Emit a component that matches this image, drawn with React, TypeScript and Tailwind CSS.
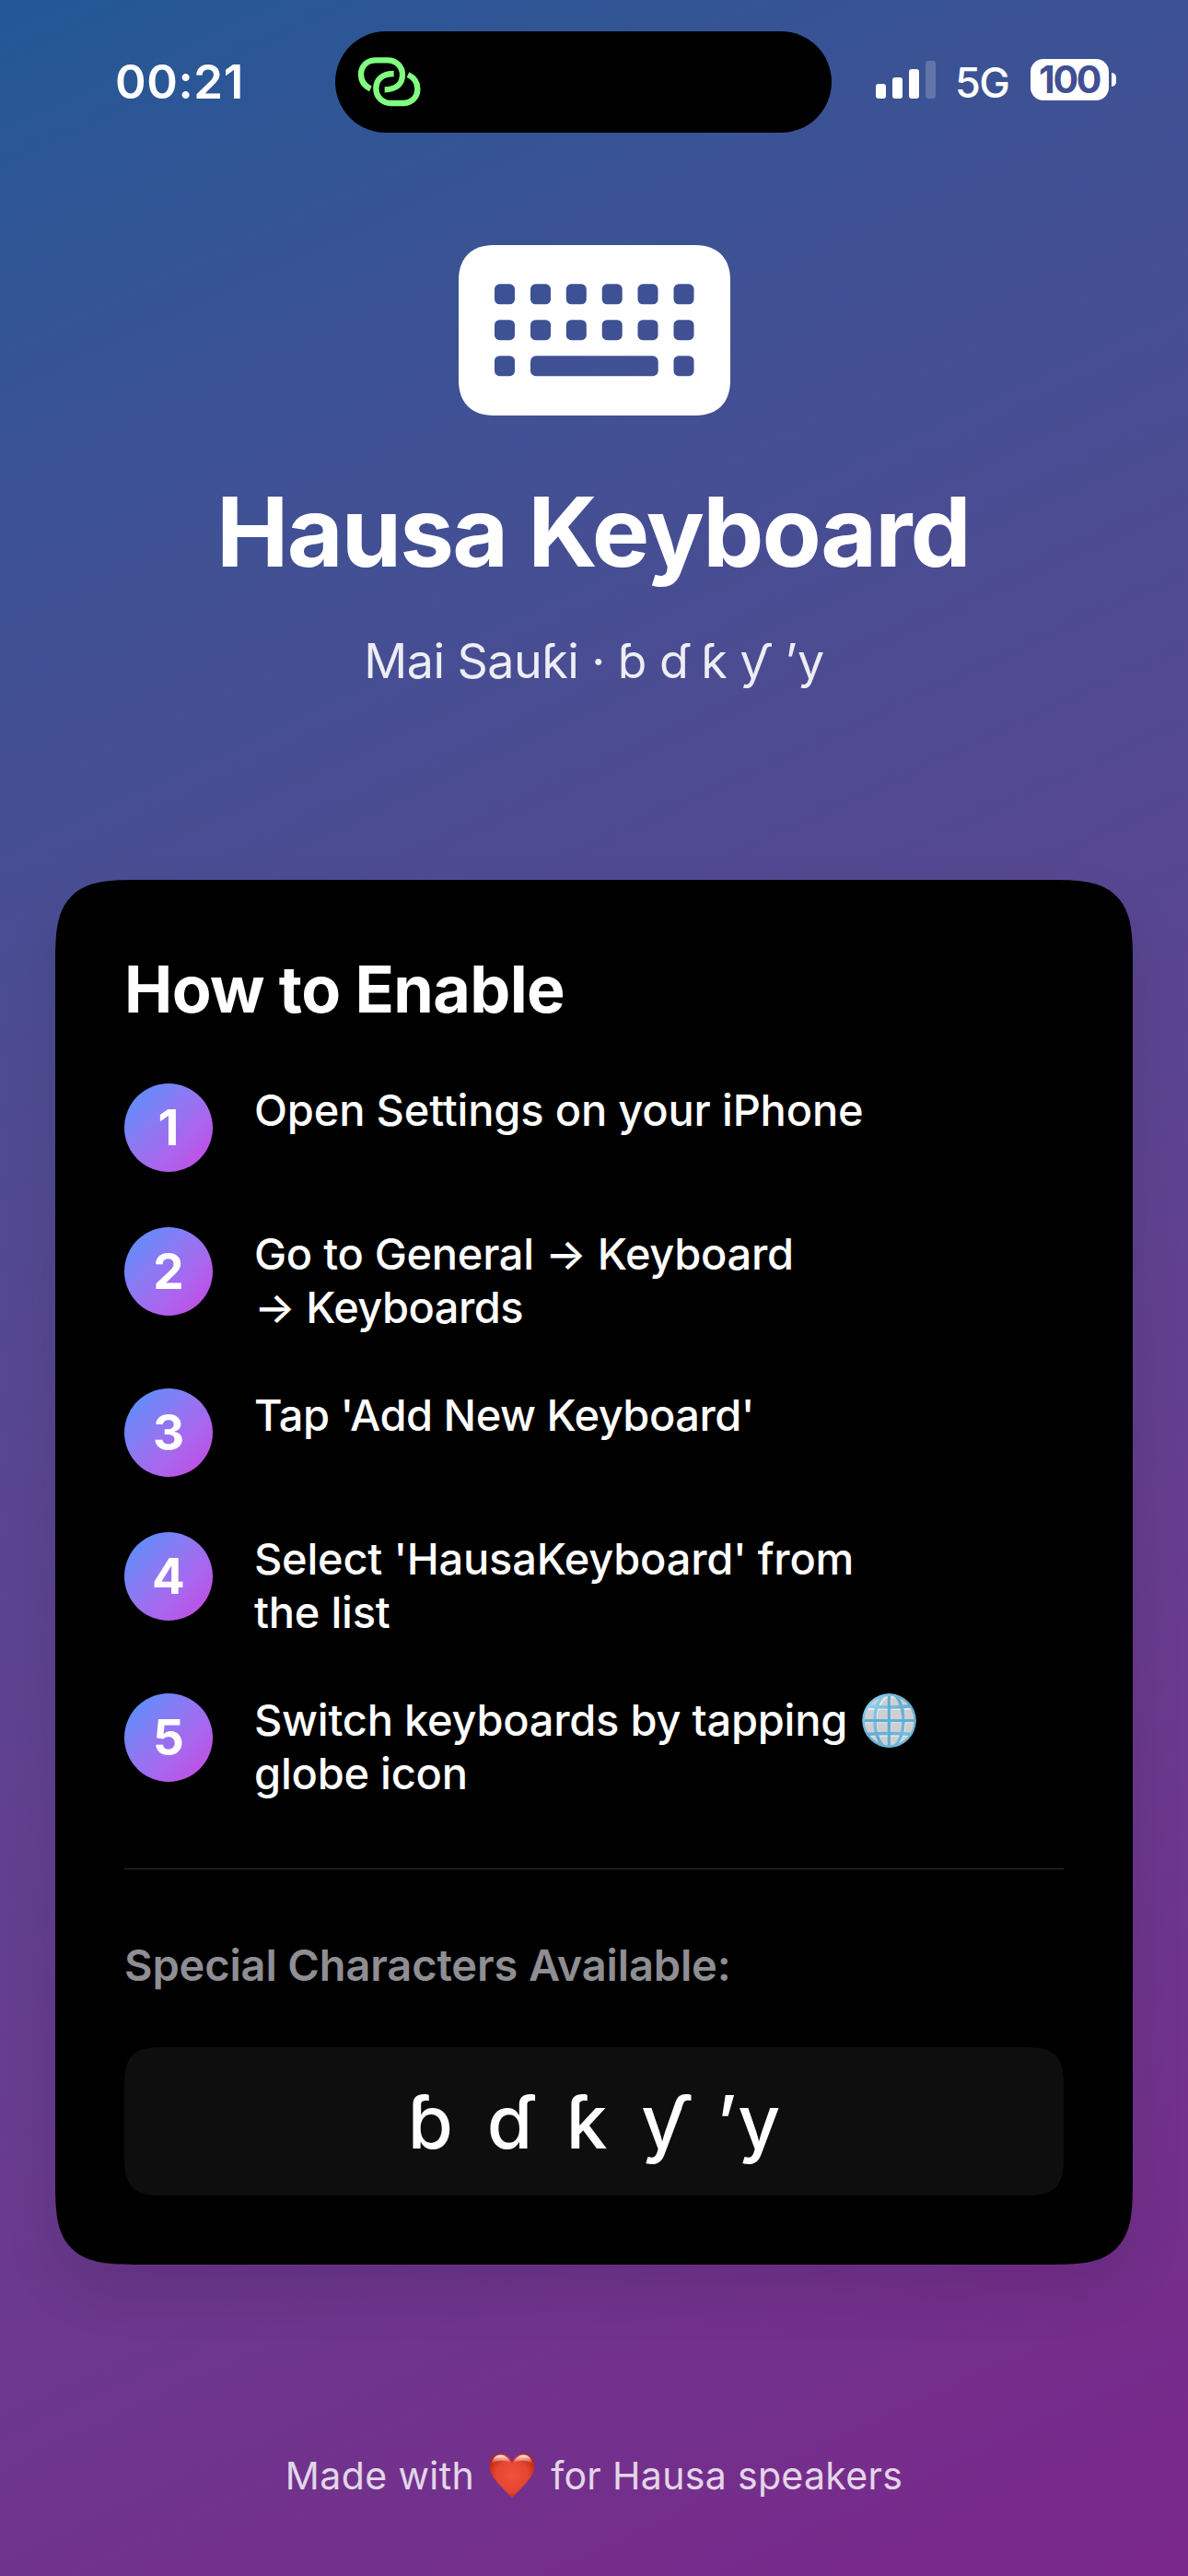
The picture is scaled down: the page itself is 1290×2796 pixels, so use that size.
import type { ReactNode } from "react";

function LinkIcon() {
  const ring =
    "M67 127C46 117 36 101 36 80C36 52 57 34 84 34H122C150 34 171 54 171 82C171 111 151 130 113 130";
  return (
    <svg className="h-[70px] w-[90px]" viewBox="0 0 270 210" fill="none" stroke="#80ff80" strokeWidth="19">
      <path d={ring} />
      <path d={ring} transform="rotate(180 128 104)" />
    </svg>
  );
}

function SignalBars() {
  return (
    <div className="flex h-[41px] items-end gap-[7px]">
      <div className="h-4 w-[11px] rounded-[3px] bg-white" />
      <div className="h-[23px] w-[11px] rounded-[3px] bg-white" />
      <div className="h-8 w-[11px] rounded-[3px] bg-white" />
      <div className="h-[41px] w-[11px] rounded-[3px] bg-white/20" />
    </div>
  );
}

function Battery() {
  return (
    <div className="flex items-center gap-[3px]">
      <div className="flex h-[45px] w-[85px] items-center justify-center rounded-[14px] bg-white pr-px text-[41px] leading-none font-bold tracking-[-2.4px] text-[#414f93]">
        100
      </div>
      <div className="h-[15px] w-[5px] rounded-r-full bg-white" />
    </div>
  );
}

function StatusBar() {
  return (
    <header className="flex h-[110px] items-center pl-[125px] text-white">
      <div className="-mt-0.5 w-[239px] text-[51px] leading-none font-semibold tracking-[0.6px]">00:21</div>
      <div className="flex h-[110px] w-[539px] items-center rounded-full bg-black pl-4">
        <LinkIcon />
      </div>
      <div className="ml-12 flex items-center">
        <div className="-mt-[5px]">
          <SignalBars />
        </div>
        <div className="ml-[21px] w-[82px] text-[45px] leading-none font-medium tracking-[-1.5px]">5G</div>
        <div className="-mt-[5px]">
          <Battery />
        </div>
      </div>
    </header>
  );
}

function KeyboardIcon() {
  const columns = [39, 78, 116.8, 155.7, 194.5, 233.5];
  return (
    <svg className="h-[185px] w-[295px]" viewBox="0 0 295 185">
      <mask id="keys">
        <rect width="295" height="185" fill="#fff" />
        {columns.map((x) => (
          <g key={x}>
            <rect x={x} y="42.3" width="22" height="22" rx="5.5" />
            <rect x={x} y="81.2" width="22" height="22" rx="5.5" />
          </g>
        ))}
        <rect x="39" y="120.2" width="22" height="22" rx="5.5" />
        <rect x="78" y="120.2" width="138.7" height="22" rx="6" />
        <rect x="233.5" y="120.2" width="22" height="22" rx="5.5" />
      </mask>
      <path
        mask="url(#keys)"
        fill="#fff"
        d="M38 0H257C281 0 295 14 295 38V147C295 171 281 185 257 185H38C14 185 0 171 0 147V38C0 14 14 0 38 0Z"
      />
    </svg>
  );
}

function GlobeIcon() {
  return (
    <svg
      role="img"
      aria-label="globe"
      className="relative -top-1 -my-3 ml-1 inline-block h-[59px] w-[59px] align-middle"
      viewBox="0 0 59 59"
      fill="none"
    >
      <defs>
        <linearGradient id="wire" x1="0" y1="0" x2="1" y2="1">
          <stop offset="0" stopColor="#8fd6f5" />
          <stop offset="0.5" stopColor="#62abd0" />
          <stop offset="1" stopColor="#74bde2" />
        </linearGradient>
        <clipPath id="globe-disc">
          <circle cx="29.5" cy="29.5" r="29" />
        </clipPath>
      </defs>
      <circle cx="29.5" cy="29.5" r="28.5" fill="#cfcfd1" />
      <g clipPath="url(#globe-disc)">
        <g stroke="#eaf0f4" strokeWidth="1.5" transform="translate(1.6 2)">
          <ellipse cx="29.5" cy="29.5" rx="15.5" ry="28" />
          <path d="M5 15H54M1 29.5H58M5 44H54M29.5 1V58" />
        </g>
        <g stroke="url(#wire)" strokeWidth="3.4">
          <ellipse cx="29.5" cy="29.5" rx="15.5" ry="30" />
          <path d="M4 13.5Q29.5 16.5 55 13.5M4 44.5Q29.5 42.5 55 44.5" />
        </g>
        <path d="M0 28H59V31.2H0ZM27.8 0H31.2V59H27.8Z" fill="#62aed4" />
      </g>
      <circle cx="29.5" cy="29.5" r="28" stroke="url(#wire)" strokeWidth="2.4" />
    </svg>
  );
}

function HeartIcon() {
  return (
    <svg role="img" aria-label="love" className="h-[50px] w-[50px]" viewBox="0 0 50 50">
      <defs>
        <radialGradient id="heart" cx="0.5" cy="0.5" r="0.6">
          <stop offset="0" stopColor="#f0523c" />
          <stop offset="0.6" stopColor="#e6452f" />
          <stop offset="1" stopColor="#b8200e" />
        </radialGradient>
        <linearGradient id="shine" x1="0" y1="0" x2="0" y2="1">
          <stop offset="0" stopColor="#fff" stopOpacity="0.95" />
          <stop offset="1" stopColor="#fff" stopOpacity="0" />
        </linearGradient>
      </defs>
      <path
        fill="url(#heart)"
        d="M25 11.5C22.5 4.5 18 .7 13 .7C5.5 .7 .7 6 .7 14.5C.7 27 14 37 25 49.3C36 37 49.3 27 49.3 14.5C49.3 6 44.5 .7 37 .7C32 .7 27.5 4.5 25 11.5Z"
      />
      <path fill="url(#shine)" d="M3 12C4 5.5 8 2.6 12.5 2.6C17 2.6 21 5.5 23 11Q13 6 3 12Z" />
      <path fill="url(#shine)" d="M47 12C46 5.5 42 2.6 37.5 2.6C33 2.6 29 5.5 27 11Q37 6 47 12Z" />
    </svg>
  );
}

function Step({ number, children }: { number: number; children: ReactNode }) {
  return (
    <li className="flex items-start gap-[45px]">
      <div className="flex size-24 items-center justify-center rounded-full bg-[linear-gradient(135deg,#4f94ff_0%,#8b7af2_40%,#a966ee_65%,#c944e0_100%)] text-[53px] leading-none font-bold">
        {number}
      </div>
      <p className="text-[47px] leading-[57.5px] font-medium tracking-[-0.24px]">{children}</p>
    </li>
  );
}

export default function App() {
  return (
    <div className="flex h-[2796px] w-[1290px] flex-col overflow-hidden bg-[linear-gradient(155.23deg_in_oklab,#215896,#7a268b)] pt-[34px] font-['Inter','Noto_Sans',sans-serif] text-white">
      <StatusBar />

      <section className="mt-[122px] flex flex-col items-center">
        <KeyboardIcon />
        <h1 className="mt-[66px] mr-0.5 text-[105px] leading-[120px] font-bold tracking-[-1.86px]">Hausa Keyboard</h1>
        <p className="mt-[49px] text-[52px] leading-[64px] tracking-[-0.55px] text-white/90">
          Mai Sauƙi · ɓ ɗ ƙ ƴ ʼy
        </p>
      </section>

      <main className="mx-[60px] mt-[205px] rounded-[92px] bg-black px-[75px] pt-[77px] pb-[75px] shadow-[0_30px_60px_rgba(0,0,0,0.1)] [corner-shape:superellipse(1.7)]">
        <h2 className="text-[70px] leading-[84px] font-bold tracking-[-0.63px]">How to Enable</h2>
        <ol className="mt-[60px] flex flex-col gap-[60px]">
          <Step number={1}>
            <span className="tracking-[-0.18px]">Open Settings on your iPhone</span>
          </Step>
          <Step number={2}>
            <span className="tracking-[-0.3px]">Go to General → Keyboard</span>
            <br />
            <span className="tracking-[-0.55px]">→ Keyboards</span>
          </Step>
          <Step number={3}>
            <span className="tracking-[-0.5px]">Tap 'Add New Keyboard'</span>
          </Step>
          <Step number={4}>
            Select 'HausaKeyboard' from
            <br />
            the list
          </Step>
          <Step number={5}>
            Switch keyboards by tapping <GlobeIcon />
            <br />
            globe icon
          </Step>
        </ol>
        <div className="mt-[75px] h-px bg-[#303032]" />
        <h3 className="mt-[75px] text-[47px] leading-[58px] font-semibold tracking-[-0.15px] text-[#8e8e93]">
          Special Characters Available:
        </h3>
        <div className="mt-[60px] flex h-[161px] items-center justify-center rounded-[46px] bg-[#0e0e0e] text-[80px] leading-none font-medium whitespace-pre [corner-shape:superellipse(1.7)]">
          <span className="[word-spacing:-3px]">ɓ  ɗ  ƙ  </span>
          <span className="[word-spacing:-8px]">ƴ  ʼy</span>
        </div>
      </main>

      <footer className="mt-[204px] flex h-[50px] items-center justify-center text-[41px] leading-[50px] text-white/80">
        <span className="tracking-[0.4px]">Made with</span>
        <span className="mr-[17px] ml-4">
          <HeartIcon />
        </span>
        <span className="tracking-[0.33px]">for Hausa speakers</span>
      </footer>
    </div>
  );
}
